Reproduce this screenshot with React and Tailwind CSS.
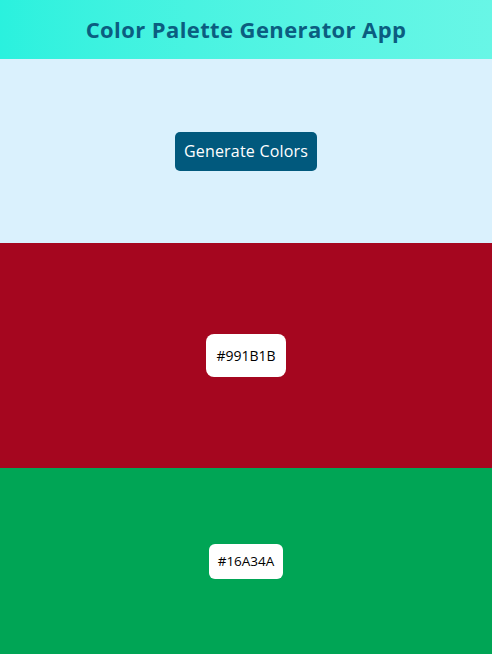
export default function App() {
  const font = { fontFamily: '"Open Sans", "Noto Sans", sans-serif' };
  return (
    <div className="flex flex-col w-full min-h-screen" style={font}>
      {/* Header */}
      <header className="h-[59px] flex items-center justify-center bg-gradient-to-r from-[#2af1de] to-[#68f6e6]">
        <h1 className="text-[22px] font-bold text-[#0b5d80] tracking-[0.4px]">
          Color Palette Generator App
        </h1>
      </header>

      {/* Controls */}
      <section className="h-[184px] flex items-center justify-center bg-[#daf1fd]">
        <button className="h-[39px] w-[142px] rounded-[5px] bg-[#01597d] text-white text-[16px] tracking-[0.2px]">
          Generate Colors
        </button>
      </section>

      {/* Swatches */}
      <section className="h-[225px] flex items-center justify-center bg-[#a5061f]">
        <div className="h-[43px] w-[80px] rounded-[8px] bg-white flex items-center justify-center text-[14px] text-black">
          #991B1B
        </div>
      </section>
      <section className="h-[187px] flex items-center justify-center bg-[#00a555]">
        <div className="h-[35px] w-[74px] rounded-[6px] bg-white flex items-center justify-center text-[13.5px] text-black">
          #16A34A
        </div>
      </section>
    </div>
  );
}
